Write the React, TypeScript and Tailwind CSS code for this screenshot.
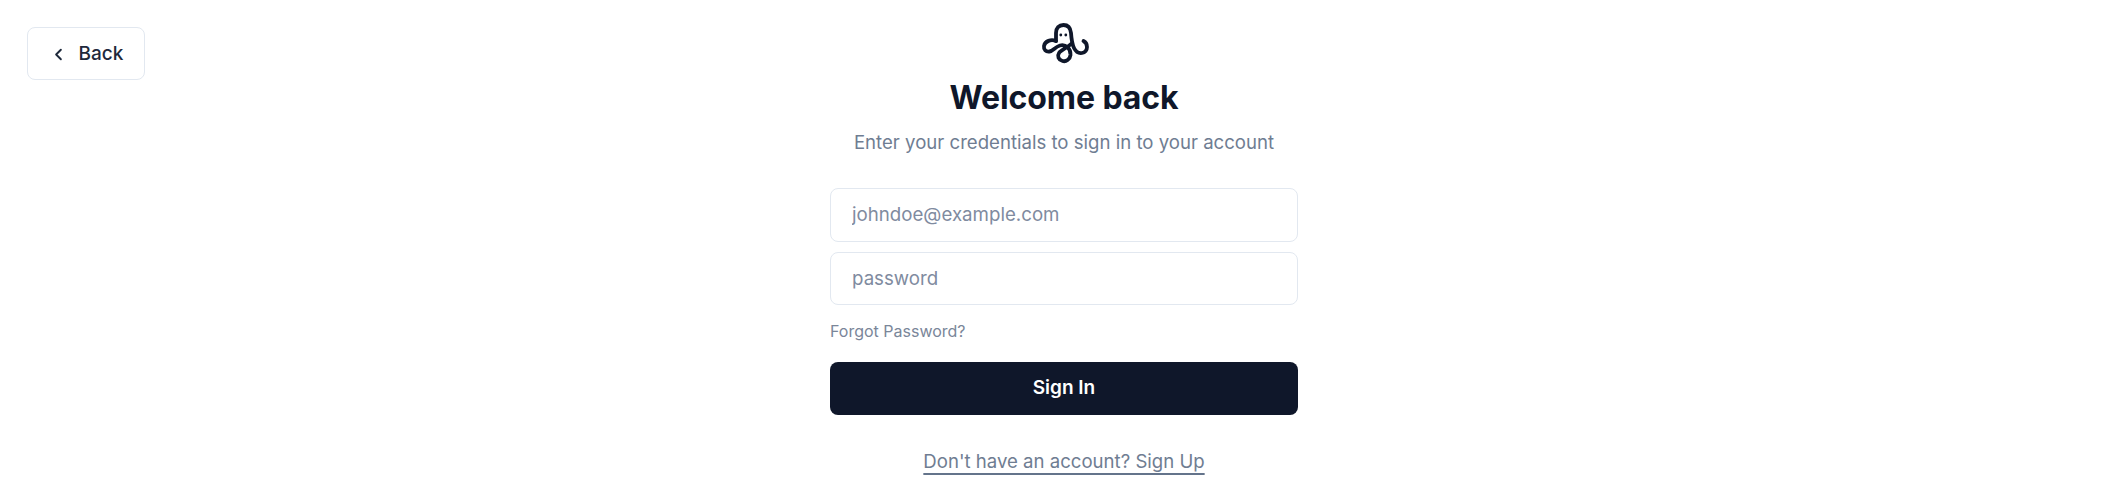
export default function App() {
  return (
    <div className="relative h-[496px] w-full bg-white pl-[6px] font-['Inter',sans-serif] overflow-hidden">
      <button className="absolute left-[27px] top-[27px] flex h-[53px] w-[118px] items-center justify-center gap-[11px] rounded-[8px] border border-[#e2e8f0] bg-white pt-[1px] text-[19px] font-medium text-[#1e293b]">
        <svg width="19" height="19" viewBox="0 0 24 24" fill="none" stroke="currentColor" strokeWidth="2.4" strokeLinecap="round" strokeLinejoin="round"><path d="m15 18-6-6 6-6" /></svg>
        <span>Back</span>
      </button>
      <div className="mx-auto flex w-[468px] flex-col items-center pt-[22px]">
        <svg width="50" height="44" viewBox="20 12 50 44" fill="none" stroke="#0f172a" strokeWidth="3.800" strokeLinecap="round" strokeLinejoin="round" className="ml-[2px]">
          <path d="M36 31 V23 C36 18 39 15 43.500 15 C48 15 50.500 18 51 23 C51.500 30 52 34 54 38 C56 42 59 43.500 62 43 C65 42.500 67 40 67 37 C67 34 65.500 32 63.500 31" />
          <path d="M36 31 C31 29 25 31 24 36 C23.500 40 26 42 29.500 41.500 C33 41 35 37 40 35.500 C46 34 51 39 50.500 45 C50 49.500 46 52 42.500 51 C38.500 50 37 46 39 43 C41 40 47 38 51 34" />
          <circle cx="40.800" cy="25" r="1.400" fill="#0f172a" stroke="none" />
          <circle cx="45.800" cy="25" r="1.400" fill="#0f172a" stroke="none" />
        </svg>
        <h1 className="mt-[10px] text-[32px] leading-[44px] font-[750] tracking-[-0.1px] text-[#0f172a]">Welcome back</h1>
        <p className="mt-[8px] text-[18.6px] leading-[28px] text-[#6f7d92]">Enter your credentials to sign in to your account</p>
        <input readOnly placeholder="johndoe@example.com" className="mt-[32px] h-[54px] w-full rounded-[8px] border border-[#e2e8f0] bg-white px-[21px] pb-[2px] text-[18.7px] outline-none placeholder:text-[#7f8ba0]" />
        <input readOnly placeholder="password" className="mt-[10px] h-[53px] w-full rounded-[8px] border border-[#e2e8f0] bg-white px-[21px] pb-[1px] text-[18.7px] outline-none placeholder:text-[#7f8ba0]" />
        <a className="mt-[16px] self-start text-[16px] leading-[20px] text-[#7a8699]">Forgot Password?</a>
        <button className="mt-[21px] h-[53px] w-full rounded-[8px] bg-[#0f172a] text-[19px] font-semibold text-white">Sign In</button>
        <a className="mt-[33px] text-[18.6px] leading-[27px] text-[#6f7d92] underline decoration-[#64748b] decoration-[1.5px] underline-offset-[5px]">Don't have an account? Sign Up</a>
      </div>
    </div>
  );
}
